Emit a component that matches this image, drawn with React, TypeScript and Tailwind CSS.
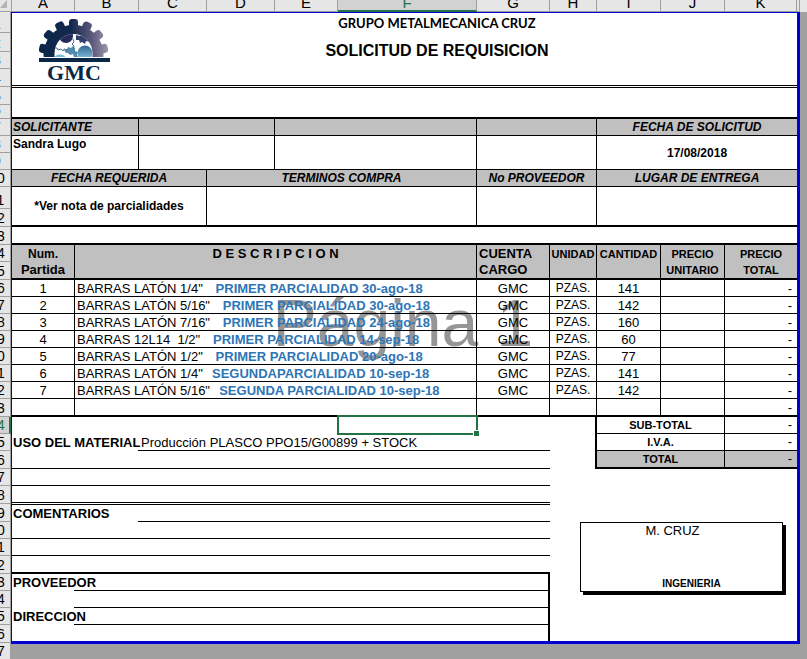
import React from "react";

const SHEET_GRID =
  "grid grid-cols-[minmax(0,63fr)_minmax(0,64fr)_minmax(0,68fr)_minmax(0,68fr)_minmax(0,63fr)_minmax(0,139fr)_minmax(0,73fr)_minmax(0,47fr)_minmax(0,64fr)_minmax(0,64fr)_minmax(0,72fr)]";

const LETTERS = ["A", "B", "C", "D", "E", "F", "G", "H", "I", "J", "K"];

const ROW_HEIGHTS = [
  "h-[21px]", "h-[19px]", "h-[17px]", "h-[18px]", "h-[18px]", "h-[14px]", "h-[17px]", "h-[17px]", "h-[17px]",
  "h-[17px]", "h-[22px]", "h-[18px]", "h-[18px]", "h-[17px]", "h-[18px]", "h-[17px]", "h-[17px]", "h-[17px]",
  "h-[17px]", "h-[17px]", "h-[17px]", "h-[17px]", "h-[18px]", "h-[17px]", "h-[17px]", "h-[18px]", "h-[17px]",
  "h-[18px]", "h-[18px]", "h-[17px]", "h-[17px]", "h-[18px]", "h-[17px]", "h-[17px]", "h-[17px]", "h-[18px]",
  "h-[17px]",
];

type Item = { product: string; note: string; qty: string };

const ITEMS: Item[] = [
  { product: 'BARRAS LATÓN 1/4"   ', note: "PRIMER PARCIALIDAD 30-ago-18", qty: "141" },
  { product: 'BARRAS LATÓN 5/16"   ', note: "PRIMER PARCIALIDAD 30-ago-18", qty: "142" },
  { product: 'BARRAS LATÓN 7/16"   ', note: "PRIMER PARCIALIDAD 24-ago-18", qty: "160" },
  { product: 'BARRAS 12L14  1/2"   ', note: "PRIMER PARCIALIDAD 14-sep-18", qty: "60" },
  { product: 'BARRAS LATÓN 1/2"   ', note: "PRIMER PARCIALIDAD 20-ago-18", qty: "77" },
  { product: 'BARRAS LATÓN 1/4"  ', note: "SEGUNDAPARCIALIDAD 10-sep-18", qty: "141" },
  { product: 'BARRAS LATÓN 5/16"  ', note: "SEGUNDA PARCIALIDAD 10-sep-18", qty: "142" },
];

function SheetColumns() {
  return (
    <colgroup>
      <col className="w-[63px]" />
      <col className="w-[64px]" />
      <col className="w-[68px]" />
      <col className="w-[68px]" />
      <col className="w-[63px]" />
      <col className="w-[139px]" />
      <col className="w-[73px]" />
      <col className="w-[47px]" />
      <col className="w-[64px]" />
      <col className="w-[64px]" />
      <col className="w-[72px]" />
    </colgroup>
  );
}

function Logo() {
  return (
    <svg viewBox="0 0 72 63" className="h-[63px] w-[72px]" role="img" aria-label="GMC">
      <defs>
        <linearGradient id="gear" x1="0" x2="1" y1="0" y2="0">
          <stop offset="0" stopColor="#0a2748" />
          <stop offset="0.45" stopColor="#13284d" />
          <stop offset="0.75" stopColor="#5c5a7c" />
          <stop offset="1" stopColor="#a3a0b4" />
        </linearGradient>
        <linearGradient id="disc" x1="0" x2="0" y1="0" y2="1">
          <stop offset="0" stopColor="#2f6590" />
          <stop offset="1" stopColor="#8ccbe6" />
        </linearGradient>
        <clipPath id="gearShape">
          <circle cx="34.500" cy="36" r="30" />
          <rect x="30" y="0" width="9" height="12" rx="3" />
          <rect x="30" y="0" width="9" height="12" rx="3" transform="rotate(25 34.500 36)" />
          <rect x="30" y="0" width="9" height="12" rx="3" transform="rotate(51 34.500 36)" />
          <rect x="30" y="1" width="9" height="12" rx="3" transform="rotate(78 34.500 36)" />
          <rect x="30" y="0" width="9" height="12" rx="3" transform="rotate(-25 34.500 36)" />
          <rect x="30" y="0" width="9" height="12" rx="3" transform="rotate(-51 34.500 36)" />
          <rect x="30" y="1" width="9" height="12" rx="3" transform="rotate(-78 34.500 36)" />
        </clipPath>
        <clipPath id="inside">
          <path d="M15.500 38V34A19 19 0 0 1 53.500 34V38Z" />
        </clipPath>
      </defs>
      <rect x="0" y="0" width="71" height="38" fill="url(#gear)" clipPath="url(#gearShape)" />
      <g clipPath="url(#inside)">
        <rect x="15" y="12" width="40" height="27" fill="#fff" />
        <circle cx="27" cy="17" r="7" fill="#252a5b" />
        <path d="M37 16l4 1 2-2 5 3 3 5-4-1-1 3-3-2-2 1-1-3-3 0z" fill="#31406a" />
        <circle cx="46" cy="34" r="7.500" fill="url(#disc)" />
        <ellipse cx="21" cy="39" rx="5.500" ry="3.500" fill="#72bddc" />
        <path d="M25 31l3-1 1-2 3 1 2-2 2 2 0 3 3 1-1 3 1 2-4 0-1-3-3 1-2-2-2 0z" fill="#528cad" />
        <path d="M15 29l3 0 1 2 3-1 2 2 1-2 4 1M34 20l1 3-2 2 2 2-1 3" fill="none" stroke="#4e7293" strokeWidth="1" />
      </g>
      <rect x="0" y="39" width="71" height="4" fill="#0a2748" />
      <text x="35" y="61" textAnchor="middle" className="fill-[#0a2748] font-['Liberation_Serif',serif] text-[22px] font-bold">
        GMC
      </text>
    </svg>
  );
}

function ColumnHeaders() {
  return (
    <div className="flex h-[12px] bg-[#e6e6e6] pr-[7px]">
      <div className="flex w-[12px] shrink-0 justify-end border-r border-b border-[#9f9f9f] pr-[4px]">
        <svg viewBox="0 0 7 8" className="h-[8px] w-[7px]" aria-hidden="true">
          <path d="M7 0V8H0Z" fill="#b4b4b4" />
        </svg>
      </div>
      <div className={`${SHEET_GRID} flex-1 text-center text-[15px] leading-[6px]`}>
        {LETTERS.map((l) =>
          l === "F" ? (
            <div key={l} className="overflow-hidden border-r border-b-2 border-r-[#9f9f9f] border-b-[#217346] bg-[#d2d2d2] text-[#217346]">
              {l}
            </div>
          ) : (
            <div key={l} className="overflow-hidden border-r border-b border-[#9f9f9f]">
              {l}
            </div>
          )
        )}
      </div>
      <div className="w-[3px] border-r border-b border-[#9f9f9f]" />
    </div>
  );
}

function RowHeaders() {
  return (
    <div className="w-[11px] shrink-0 overflow-hidden bg-[#e6e6e6] text-[14px] leading-[16px]">
      {ROW_HEIGHTS.map((h, i) => (
        <div
          key={i}
          className={`${h} flex items-end overflow-hidden border-r border-b border-b-[#9f9f9f] ${
            i === 23 ? "border-r-2 border-r-[#217346] bg-[#d2d2d2] text-[#217346]" : "border-r-[#9f9f9f]"
          }`}
        >
          <span className="-ml-[15px] w-[24px] shrink-0 text-center">{i + 1}</span>
        </div>
      ))}
    </div>
  );
}

function RequestTable() {
  const head = "h-[17px] border-b border-black bg-[#c0c0c0] p-0 font-bold italic";
  const side = "border-r border-black";
  return (
    <table className="w-full table-fixed border-separate border-spacing-0 text-center text-[12px] leading-[16px] font-bold">
      <SheetColumns />
      <tbody>
        <tr>
          <th colSpan={2} className={`${head} ${side} pl-px text-left`}>SOLICITANTE</th>
          <th colSpan={2} className={`${head} ${side}`} />
          <th colSpan={2} className={`${head} ${side}`} />
          <th colSpan={2} className={`${head} ${side}`} />
          <th colSpan={3} className={head}>FECHA DE SOLICITUD</th>
        </tr>
        <tr>
          <td colSpan={2} className={`h-[34px] border-b p-0 pl-px text-left align-top ${side}`}>Sandra Lugo</td>
          <td colSpan={2} className={`border-b p-0 ${side}`} />
          <td colSpan={2} className={`border-b p-0 ${side}`} />
          <td colSpan={2} className={`border-b p-0 ${side}`} />
          <td colSpan={3} className="border-b border-black p-0">17/08/2018</td>
        </tr>
        <tr>
          <th colSpan={3} className={`${head} ${side}`}>FECHA REQUERIDA</th>
          <th colSpan={3} className={`${head} ${side}`}>TERMINOS COMPRA</th>
          <th colSpan={2} className={`${head} ${side}`}>No PROVEEDOR</th>
          <th colSpan={3} className={head}>LUGAR DE ENTREGA</th>
        </tr>
        <tr>
          <td colSpan={3} className={`h-[40px] border-b-2 p-0 ${side}`}>*Ver nota de parcialidades</td>
          <td colSpan={3} className={`border-b-2 p-0 ${side}`} />
          <td colSpan={2} className={`border-b-2 p-0 ${side}`} />
          <td colSpan={3} className="border-b-2 border-black p-0" />
        </tr>
      </tbody>
    </table>
  );
}

function ItemsTable() {
  const head = "h-[35px] border-b-2 border-black bg-[#c0c0c0] p-0 pt-px align-top font-bold";
  const cell = "h-[17px] border-r border-b border-black p-0 pt-px";
  const last = "h-[18px] border-r border-b-2 border-black p-0";
  return (
    <div className="relative">
      <div className="pointer-events-none absolute inset-x-0 top-[38px] pr-[3px] text-center text-[66px] leading-[80px] text-[#969696]">
        Página 1
      </div>
      <table className="relative w-full table-fixed border-separate border-spacing-0 text-center text-[13px] leading-[16px] whitespace-nowrap">
        <SheetColumns />
        <thead>
          <tr>
            <th className={`${head} border-r`}>
              <span className="block text-[12px]">Num.</span>
              <span className="block">Partida</span>
            </th>
            <th colSpan={5} className={`${head} border-r`}>D E S C R I P C I O N</th>
            <th className={`${head} border-r pl-[2px] text-left`}>CUENTA<br />CARGO</th>
            <th className={`${head} border-r text-[11px]`}>UNIDAD</th>
            <th className={`${head} border-r text-[11px]`}>CANTIDAD</th>
            <th className={`${head} border-r text-[11px]`}>PRECIO<br />UNITARIO</th>
            <th className={`${head} text-[11px]`}>PRECIO<br />TOTAL</th>
          </tr>
        </thead>
        <tbody className="leading-[15px]">
          {ITEMS.map((it, i) => (
            <tr key={i}>
              <td className={cell}>{i + 1}</td>
              <td colSpan={5} className={`${cell} pl-[2px] text-left whitespace-pre`}>
                {it.product}
                <span className="ml-[2px] font-bold text-[#2e75b6]">{it.note}</span>
              </td>
              <td className={cell}>GMC</td>
              <td className={`${cell} text-[12px]`}>PZAS.</td>
              <td className={cell}>{it.qty}</td>
              <td className={cell} />
              <td className="border-b border-black p-0 pt-px pr-[5px] text-right">-</td>
            </tr>
          ))}
          <tr>
            <td className={last} />
            <td colSpan={5} className={last} />
            <td className={last} />
            <td className={last} />
            <td className={last} />
            <td className={last} />
            <td className="border-b-2 border-black p-0 pt-px pr-[5px] text-right">-</td>
          </tr>
        </tbody>
      </table>
    </div>
  );
}

function SelectedCell() {
  return (
    <div className="relative">
      <div className="absolute -top-[2px] -right-px -bottom-px -left-px border-2 border-[#217346]">
        <div className="absolute -right-[4px] -bottom-[4px] h-[7px] w-[7px] border border-white bg-[#217346]" />
      </div>
    </div>
  );
}

function NotesAndSupplier() {
  const wide = "grid h-[17px] grid-cols-[minmax(0,126fr)_minmax(0,412fr)] pt-px whitespace-nowrap";
  const supplier = "grid h-[17px] grid-cols-[minmax(0,62fr)_minmax(0,474fr)] pt-px whitespace-nowrap";
  return (
    <div className="min-w-0 flex-[538] text-[13px] leading-[15px]">
      <div className="grid h-[17px] grid-cols-[minmax(0,326fr)_minmax(0,139fr)_minmax(0,73fr)]">
        <div />
        <SelectedCell />
      </div>
      <div className={wide}>
        <div className="pl-px font-bold">USO DEL MATERIAL</div>
        <div className="border-b border-black pl-[3px]">Producción PLASCO PPO15/G00899 + STOCK</div>
      </div>
      <div className="h-[18px] border-b border-black" />
      <div className="h-[17px] border-b border-black" />
      <div className="h-[19px] border-b-3 border-double border-black" />
      <div className={wide}>
        <div className="pl-px font-bold">COMENTARIOS</div>
        <div className="border-b border-black" />
      </div>
      <div className="h-[17px] border-b border-black" />
      <div className="h-[17px] border-b border-black" />
      <div className="h-[18px] border-b-2 border-black" />
      <div className="border-r-2 border-black">
        <div className={supplier}>
          <div className="pl-px font-bold">PROVEEDOR</div>
          <div className="border-b border-black" />
        </div>
        <div className={supplier}>
          <div />
          <div className="border-b border-black" />
        </div>
        <div className={supplier}>
          <div className="pl-px font-bold">DIRECCION</div>
          <div className="border-b border-black" />
        </div>
        <div className="h-[16px]" />
      </div>
    </div>
  );
}

function TotalsAndSignature() {
  const amount = "p-0 pr-[5px] text-right text-[13px] font-normal border-black";
  return (
    <div className="min-w-0 flex-[247]">
      <div className="grid grid-cols-[minmax(0,45fr)_minmax(0,202fr)]">
        <div />
        <table className="w-full table-fixed border-separate border-spacing-0 border-l-2 border-black text-center text-[11px] leading-[16px] font-bold">
          <colgroup>
            <col className="w-[128px]" />
            <col className="w-[72px]" />
          </colgroup>
          <tbody>
            <tr>
              <th className="h-[17px] border-r border-b border-black p-0">SUB-TOTAL</th>
              <td className={`${amount} border-b`}>-</td>
            </tr>
            <tr>
              <th className="h-[17px] border-r border-b border-black p-0">I.V.A.</th>
              <td className={`${amount} border-b`}>-</td>
            </tr>
            <tr className="bg-[#c0c0c0]">
              <th className="h-[18px] border-r border-b-2 border-black p-0">TOTAL</th>
              <td className={`${amount} border-b-2`}>-</td>
            </tr>
          </tbody>
        </table>
      </div>
      <div className="mt-[53px] mr-[14px] ml-[30px] flex h-[70px] flex-col justify-between border border-black bg-white text-center shadow-[3px_3px_0_#000]">
        <div className="pr-[18px] text-[13px] leading-[16px]">M. CRUZ</div>
        <div className="pl-[20px] text-[10px] leading-[14px] font-bold">INGENIERIA</div>
      </div>
    </div>
  );
}

export default function App() {
  return (
    <div className="h-screen overflow-hidden bg-[#a0a0a0] font-['Liberation_Sans',Arial,sans-serif] text-black">
      <ColumnHeaders />
      <div className="flex">
        <RowHeaders />
        <main className="mr-[7px] min-w-0 flex-1 self-start border-t border-r-3 border-b-3 border-l border-[#0000d0] bg-white">
          <header className="grid h-[75px] grid-cols-[minmax(0,63fr)_minmax(0,722fr)] border-b-3 border-double border-black">
            <div className="pt-[6px] pl-[27px]">
              <div className="w-[72px]">
                <Logo />
              </div>
            </div>
            <div className="pl-[2px] text-center font-bold">
              <p className="font-[Lato,sans-serif] text-[13px] leading-[20px]">GRUPO METALMECANICA CRUZ</p>
              <h1 className="pt-[8px] text-[16px] leading-[20px]">SOLICITUD DE REQUISICION</h1>
            </div>
          </header>
          <div className="h-[31px] border-b-2 border-black" />
          <RequestTable />
          <div className="h-[18px] border-b-2 border-black" />
          <ItemsTable />
          <div className="flex">
            <NotesAndSupplier />
            <TotalsAndSignature />
          </div>
        </main>
      </div>
    </div>
  );
}
